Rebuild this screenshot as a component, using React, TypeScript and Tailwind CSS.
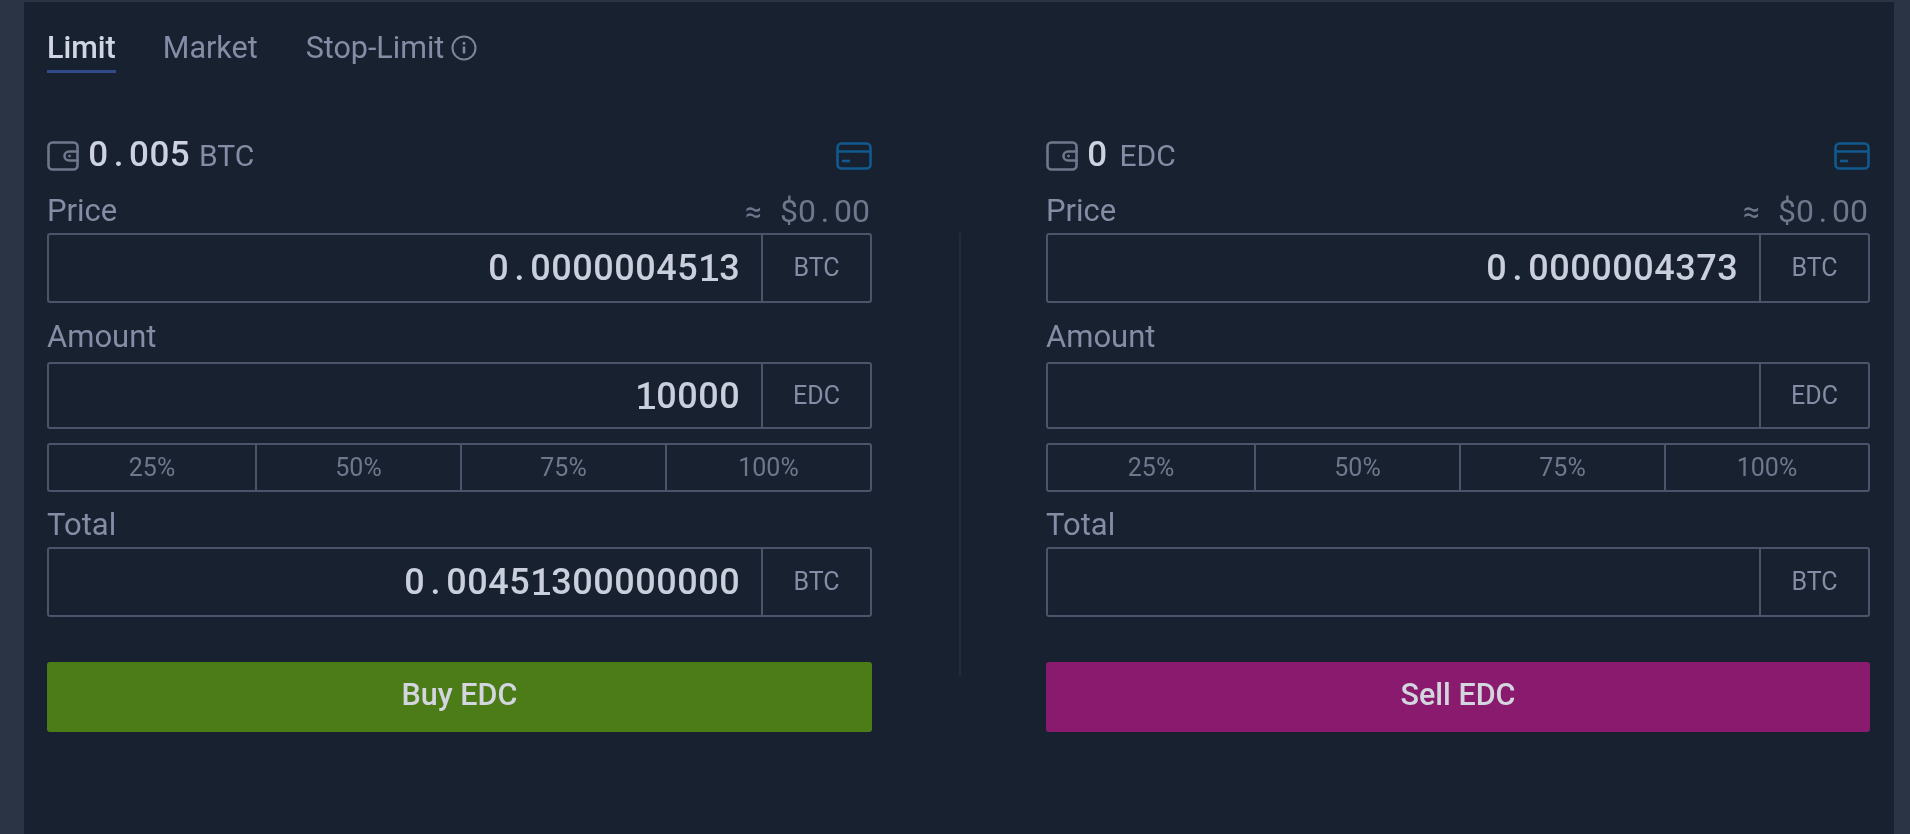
import React from "react";

const sans = "font-['Roboto','Liberation_Sans',sans-serif]";

function Mono({ text, cell }: { text: string; cell: string }) {
  return (
    <span className="inline-flex">
      {text.split("").map((ch, i) => (
        <span
          key={i}
          className={`inline-block text-center ${cell} ${
            ch === "1"
              ? "relative after:content-[''] after:absolute after:left-[4px] after:right-[1px] after:bottom-[14px] after:h-[3px] after:bg-current"
              : ""
          }`}
        >
          {ch}
        </span>
      ))}
    </span>
  );
}

function WalletIcon() {
  return (
    <svg width="33" height="30" viewBox="0 0 33 30" fill="none" stroke="#6f778d" strokeWidth="2.6">
      <rect x="1.5" y="1.5" width="29" height="27" rx="4" />
      <path d="M32 10.5H22a4.5 4.5 0 0 0 0 9h10" />
      <circle cx="22.5" cy="15" r="1" fill="#6f778d" strokeWidth="1" />
    </svg>
  );
}

function CardIcon() {
  return (
    <svg width="36" height="28" viewBox="0 0 36 28" fill="none" stroke="#105a8f" strokeWidth="2.6">
      <rect x="1.5" y="1.5" width="33" height="25" rx="4" />
      <path d="M1.5 9.5h33" />
      <path d="M6 19h8" />
    </svg>
  );
}

function InfoIcon() {
  return (
    <svg width="26" height="26" viewBox="0 0 26 26" fill="none" stroke="#7e869c" strokeWidth="2">
      <circle cx="13" cy="13" r="11.5" />
      <path d="M13 11.5v7" strokeWidth="2.6" />
      <path d="M13 7v2.6" strokeWidth="2.6" />
    </svg>
  );
}

function Field({ value, unit, h }: { value: string; unit: string; h: string }) {
  return (
    <div className={`flex w-full rounded-[3px] border-2 border-[#4c546b] ${h}`}>
      <div className="flex-1 flex items-center justify-end pr-[21px] text-[36px] font-medium text-[#c9cfdd]">
        <Mono text={value} cell="w-[21px]" />
      </div>
      <div className="w-[109px] flex items-center justify-center border-l-2 border-[#4c546b] text-[25px] text-[#858da6]">
        {unit}
      </div>
    </div>
  );
}

function Label({ children }: { children: React.ReactNode }) {
  return <div className="h-[36px] leading-[36px] text-[31px] text-[#858da6]">{children}</div>;
}

function Side(props: {
  width: string;
  balance: string;
  balanceUnit: string;
  unitGap: string;
  price: string;
  amount: string;
  total: string;
  button: string;
  color: string;
}) {
  return (
    <div className={`${props.width} shrink-0`}>
      <div className="flex items-center justify-between h-[36px]">
        <div className="flex items-center">
          <WalletIcon />
          <span className="ml-[8px] mb-[2px] text-[35px] leading-[36px] font-medium text-[#ccd2e0]">
            <Mono text={props.balance} cell="w-[20.4px]" />
          </span>
          <span className={`${props.unitGap} text-[30px] leading-[36px] text-[#858da6]`}>{props.balanceUnit}</span>
        </div>
        <div className="pl-[2px] flex">
          <CardIcon />
        </div>
      </div>
      <div className="flex items-center justify-between mt-[19px] mb-[4px] h-[36px]">
        <Label>Price</Label>
        <div className="flex items-center pr-[2px] text-[#6f778d]">
          <span className="text-[30px] mr-[18px]">≈</span>
          <span className="text-[32px]">
            <Mono text="$0.00" cell="w-[18px]" />
          </span>
        </div>
      </div>
      <Field value={props.price} unit="BTC" h="h-[70px]" />
      <div className="mt-[16px] mb-[7px]">
        <Label>Amount</Label>
      </div>
      <Field value={props.amount} unit="EDC" h="h-[67px]" />
      <div className="mt-[14px] h-[49px] flex rounded-[3px] border-2 border-[#4c546b] text-[25px] text-[#6f778d]">
        <div className="w-[208px] flex items-center justify-center border-r-2 border-[#4c546b]">25%</div>
        <div className="w-[205px] flex items-center justify-center border-r-2 border-[#4c546b]">50%</div>
        <div className="w-[205px] flex items-center justify-center border-r-2 border-[#4c546b]">75%</div>
        <div className="flex-1 flex items-center justify-center">100%</div>
      </div>
      <div className="mt-[15px] mb-[4px]">
        <Label>Total</Label>
      </div>
      <Field value={props.total} unit="BTC" h="h-[70px]" />
      <button
        className={`mt-[45px] w-full h-[70px] pb-[5px] rounded-[3px] text-[30.5px] font-medium text-[#d3d6df] ${props.color}`}
      >
        {props.button}
      </button>
    </div>
  );
}

export default function App() {
  return (
    <div className={`h-[834px] w-full overflow-hidden flex bg-[#2a3444] ${sans}`}>
      <div className="w-[24px] shrink-0" />
      <main className="flex-1 mt-[2px] bg-[#18212f] pl-[23px] pr-[24px]">
        <div className="blur-[0.6px]">
          <div className="pt-[26px] flex items-end h-[71px]">
            <div className="h-[45px] pt-[2px] border-b-[3px] border-[#334a8a] text-[30.5px] font-medium leading-[36px] text-[#d0d6e4]">
              Limit
            </div>
            <div className="ml-[47px] h-[45px] pt-[2px] text-[30.5px] leading-[36px] text-[#858da6]">Market</div>
            <div className="ml-[48px] h-[45px] pt-[2px] flex items-start text-[30.5px] leading-[36px] text-[#858da6]">
              Stop-Limit
              <span className="ml-[7px] mt-[5px]">
                <InfoIcon />
              </span>
            </div>
          </div>
          <div className="mt-[65px] flex">
            <Side
              width="w-[825px]"
              balance="0.005"
              balanceUnit="BTC"
              unitGap="ml-[9px]"
              price="0.0000004513"
              amount="10000"
              total="0.00451300000000"
              button="Buy EDC"
              color="bg-[#4b7c17]"
            />
            <div className="flex-1 flex justify-center pt-[95px] pl-[1px]">
              <div className="w-[2px] h-[443px] bg-[#222c3a]" />
            </div>
            <Side
              width="w-[824px]"
              balance="0"
              balanceUnit="EDC"
              unitGap="ml-[12px]"
              price="0.0000004373"
              amount=""
              total=""
              button="Sell EDC"
              color="bg-[#8a1a6d]"
            />
          </div>
        </div>
      </main>
      <div className="w-[16px] shrink-0" />
    </div>
  );
}
